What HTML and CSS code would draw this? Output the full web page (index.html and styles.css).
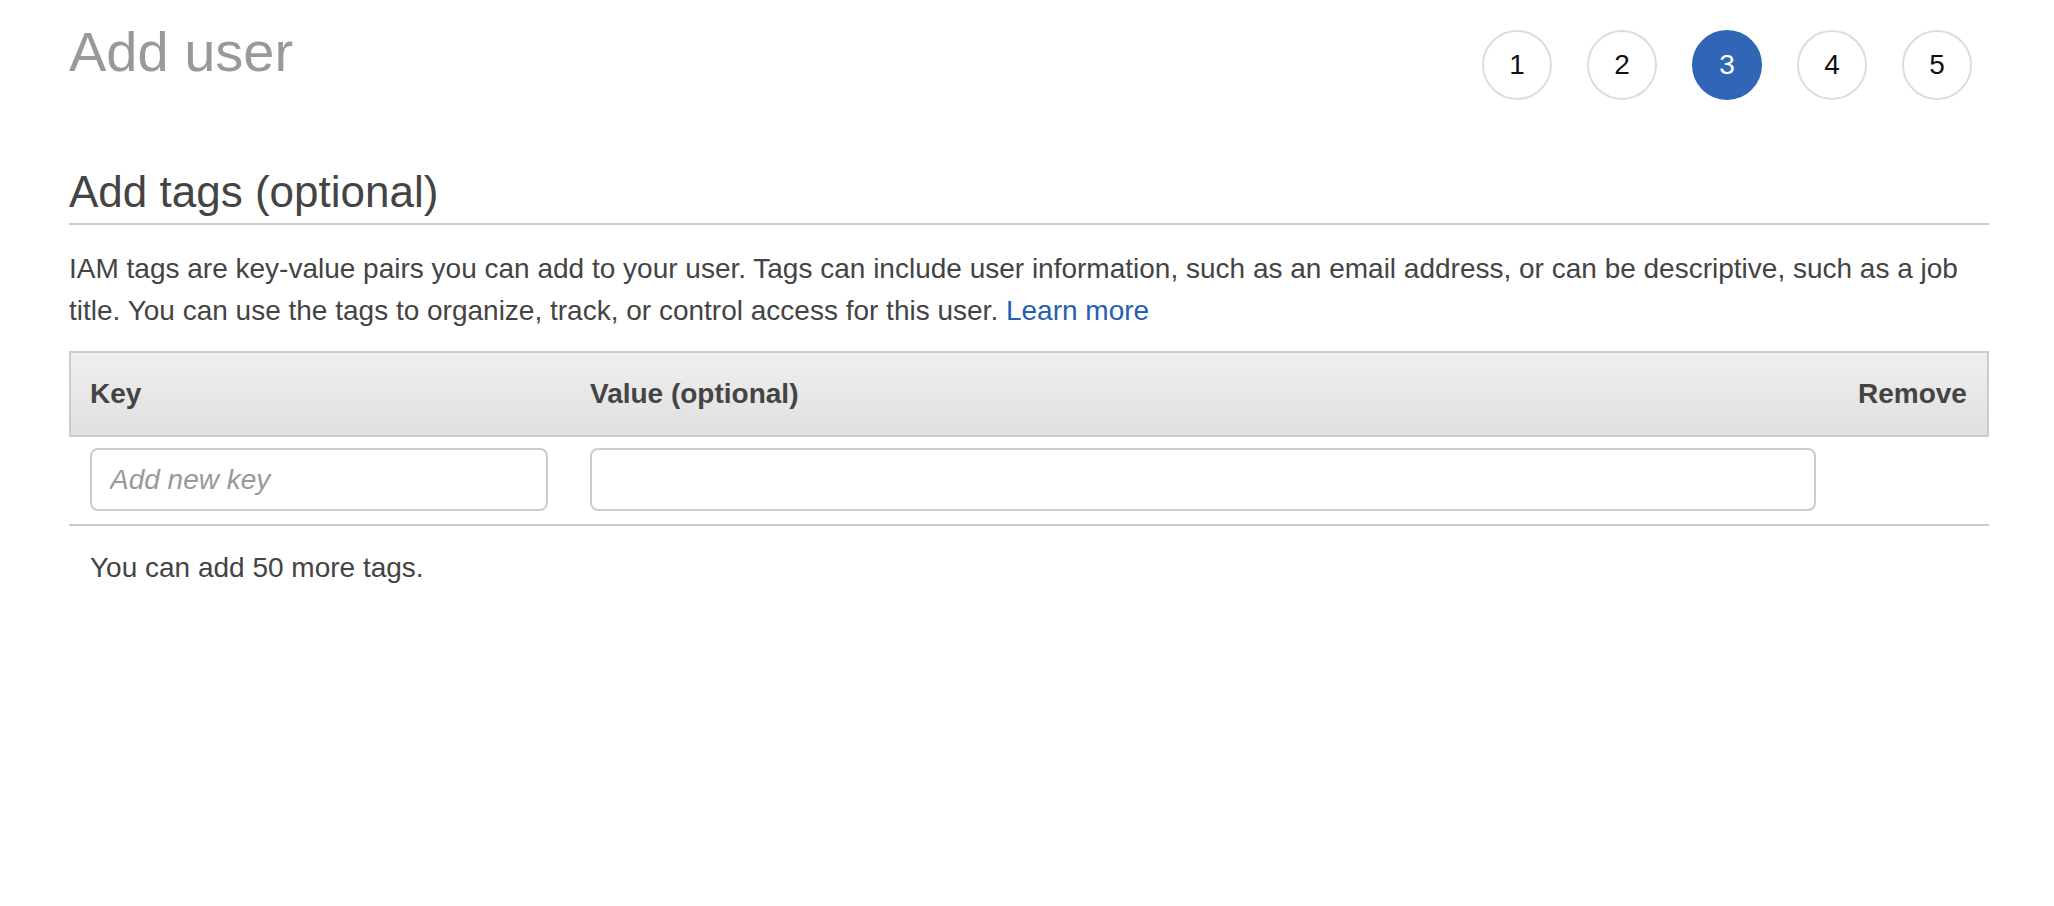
FILE: index.html
```html
<!DOCTYPE html>
<html lang="en">
<head>
<meta charset="utf-8">
<title>Add user</title>
<link rel="stylesheet" href="styles.css">
</head>
<body>
<div class="page">
  <div class="top">
    <h1 class="title">Add user</h1>
    <ol class="steps">
      <li class="step">1</li>
      <li class="step">2</li>
      <li class="step step-active">3</li>
      <li class="step">4</li>
      <li class="step">5</li>
    </ol>
  </div>

  <h2 class="section-title">Add tags (optional)</h2>
  <p class="intro">IAM tags are key-value pairs you can add to your user. Tags can include user information, such as an email address, or can be descriptive, such as a job title. You can use the tags to organize, track, or control access for this user. <a class="link" href="#">Learn more</a></p>

  <div class="tags-table">
    <div class="tags-head">
      <div class="th">Key</div>
      <div class="th">Value (optional)</div>
      <div class="th th-right">Remove</div>
    </div>
    <div class="tags-row">
      <input class="field" type="text" placeholder="Add new key">
      <input class="field" type="text">
      <div></div>
    </div>
  </div>

  <p class="remaining">You can add 50 more tags.</p>
</div>
</body>
</html>
```

FILE: styles.css
```css
html, body {
  margin: 0;
  padding: 0;
  background: #ffffff;
}

body {
  font-family: "Liberation Sans", Arial, Helvetica, sans-serif;
  color: #444444;
  font-size: 28px;
  line-height: 42px;
}

.page {
  width: 1920px;
  padding-left: 69px;
}

.top {
  display: flex;
  justify-content: space-between;
  align-items: flex-start;
  padding-top: 20px;
}

.title {
  margin: 0;
  font-size: 56px;
  line-height: 64px;
  font-weight: 400;
  color: #999999;
}

.steps {
  list-style: none;
  margin: 10px 17px 0 0;
  padding: 0;
  display: flex;
  gap: 35px;
}

.step {
  width: 66px;
  height: 66px;
  border: 2px solid #dddddd;
  border-radius: 50%;
  display: flex;
  align-items: center;
  justify-content: center;
  font-size: 28px;
  line-height: 1;
  color: #111111;
}

.step-active {
  background: #3165b5;
  border-color: #3165b5;
  color: #ffffff;
}

.section-title {
  margin: 66px 0 0 0;
  font-size: 44px;
  line-height: 52px;
  font-weight: 400;
  color: #444444;
  padding-bottom: 5px;
  border-bottom: 2px solid #cccccc;
}

.intro {
  margin: 23px 0 0 0;
}

.link {
  color: #2460b3;
  text-decoration: none;
}

.tags-table {
  margin-top: 19px;
}

.tags-head {
  display: grid;
  grid-template-columns: 458px 1226px 1fr;
  column-gap: 42px;
  padding: 0 21px 0 19px;
  height: 82px;
  align-items: center;
  border: 2px solid #cccccc;
  background: linear-gradient(to bottom, #efefef, #e0e0e0);
}

.th {
  font-weight: 700;
  line-height: 82px;
  color: #444444;
}

.th-right {
  text-align: right;
}

.tags-row {
  display: grid;
  grid-template-columns: 458px 1226px 1fr;
  column-gap: 42px;
  padding: 11px 21px 13px 21px;
  border-bottom: 2px solid #cccccc;
}

.field {
  box-sizing: border-box;
  height: 63px;
  width: 100%;
  margin: 0;
  border: 2px solid #cccccc;
  border-radius: 8px;
  padding: 0 18px;
  font-family: "Liberation Sans", Arial, Helvetica, sans-serif;
  font-size: 28px;
  color: #444444;
  background: #ffffff;
  outline: none;
}

.field::placeholder {
  color: #999999;
  font-style: italic;
}

.remaining {
  margin: 21px 0 0 0;
  padding-left: 21px;
}
```
